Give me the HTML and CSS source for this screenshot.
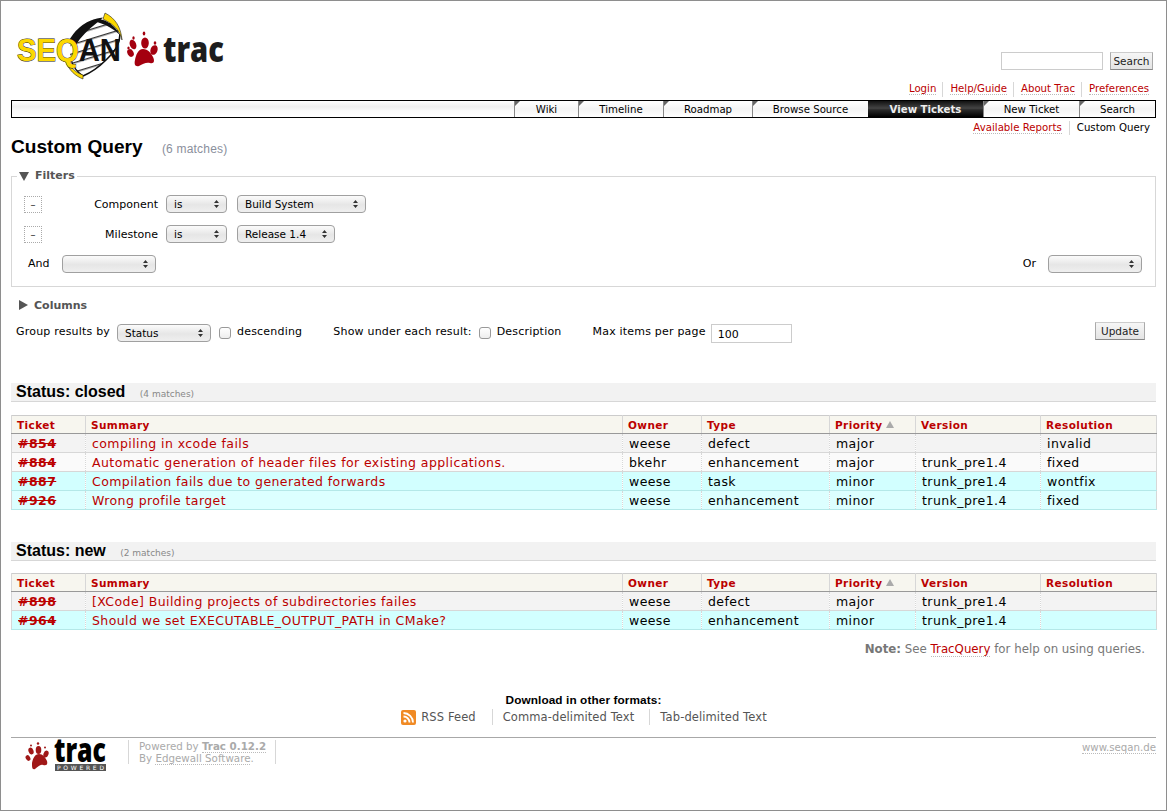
FILE: index.html
```html
<!DOCTYPE html>
<html lang="en">
<head>
<meta charset="utf-8">
<title>Custom Query – SeqAn Trac</title>
<link rel="stylesheet" href="styles.css">
</head>
<body>
<div class="page">
  <header class="banner">
    <svg class="logo" width="215" height="72" viewBox="15 10 215 72" xmlns="http://www.w3.org/2000/svg">
      <defs>
        <pattern id="hatch" width="9" height="9" patternUnits="userSpaceOnUse" patternTransform="rotate(-17)">
          <rect width="9" height="9" fill="#fff"/><rect width="9" height="1.400" fill="#333"/>
        </pattern>
      </defs>
      <path d="M72 38 C80 26 90 19 101 18 C110 20 117 26 121 34 C120 45 113 54 106 60 C98 68 90 73 83 76 C77 72 73 66 71 60 C69 52 70 44 72 38Z" fill="url(#hatch)"/>
      <path d="M71 39 C78 28 88 21 100 19 C97 22 84 30 76 43Z" fill="#111" stroke="#111" stroke-width="2"/>
      <path d="M99 19 C108 20 116 27 120 35 C115 30 107 25 97 22Z" fill="#111"/>
      <path d="M120 34 C120 45 113 54 106 60 C98 68 90 73 83 76" fill="none" stroke="#111" stroke-width="1.600"/>
      <path d="M71 60 C73 66 77 72 83 76" fill="none" stroke="#111" stroke-width="1.200"/>
      <path d="M105 13 C115 18 121 27 122 40 C120 30 113 24 103 19Z" fill="#fcd800" stroke="#222" stroke-width=".6"/>
      <path d="M66 62 C69 70 75 76 83 79 L83 75 C76 73 71 68 68 61Z" fill="#fcd800" stroke="#222" stroke-width=".6"/>
      <text class="logo-word" x="17" y="61" textLength="104" lengthAdjust="spacingAndGlyphs"><tspan class="logo-seq">SEQ</tspan><tspan class="logo-an">AN</tspan></text>
      <g fill="#a4000f">
        <path d="M143 49 C148 49 151 53 153 57 C155 61 154 64 150 63 C146 62 143 64 139 66 C135 67 134 64 135 60 C136 55 138 49 143 49Z"/>
        <ellipse cx="133" cy="44.500" rx="3.200" ry="5" transform="rotate(-20 133 44.500)"/>
        <ellipse cx="145" cy="43" rx="3.800" ry="5.500"/>
        <ellipse cx="154" cy="50" rx="3.500" ry="5" transform="rotate(20 154 50)"/>
        <ellipse cx="130.500" cy="53" rx="3" ry="4" transform="rotate(-30 130.500 53)"/>
        <ellipse cx="144" cy="33.500" rx="1.300" ry="2"/>
        <ellipse cx="133.500" cy="38" rx="1.200" ry="1.800"/>
        <ellipse cx="155" cy="43" rx="1.300" ry="1.800"/>
        <ellipse cx="128.500" cy="48" rx="1.200" ry="1.600"/>
      </g>
      <text class="logo-trac" x="163" y="62" textLength="61" lengthAdjust="spacingAndGlyphs">trac</text>
    </svg>
    <div class="banner-right">
      <form class="search-form">
        <input class="search-input" type="text" aria-label="Search">
        <button class="btn" type="button">Search</button>
      </form>
      <ul class="metanav">
        <li><a href="#">Login</a></li>
        <li><a href="#">Help/Guide</a></li>
        <li><a href="#">About Trac</a></li>
        <li><a href="#">Preferences</a></li>
      </ul>
    </div>
  </header>

  <nav class="mainnav">
    <a class="tab w-wiki" href="#">Wiki</a>
    <a class="tab w-timeline" href="#">Timeline</a>
    <a class="tab w-roadmap" href="#">Roadmap</a>
    <a class="tab w-browse" href="#">Browse Source</a>
    <a class="tab tab-active w-view" href="#">View Tickets</a>
    <a class="tab w-new" href="#">New Ticket</a>
    <a class="tab w-search" href="#">Search</a>
  </nav>

  <ul class="ctxtnav">
    <li><a href="#">Available Reports</a></li>
    <li>Custom Query</li>
  </ul>

  <h1 class="title">Custom Query <small class="numresults">(6 matches)</small></h1>

  <fieldset class="filters">
    <legend class="legend"><span class="tri-down"></span>Filters</legend>
    <div class="filter-row">
      <span class="minus">–</span>
      <label class="filter-label">Component</label>
      <select class="sel sel-op"><option>is</option></select>
      <select class="sel sel-build"><option>Build System</option></select>
    </div>
    <div class="filter-row">
      <span class="minus">–</span>
      <label class="filter-label">Milestone</label>
      <select class="sel sel-op"><option>is</option></select>
      <select class="sel sel-rel"><option>Release 1.4</option></select>
    </div>
    <div class="add-row">
      <label class="and-label">And</label>
      <select class="sel sel-add"><option></option></select>
      <label class="or-label">Or</label>
      <select class="sel sel-add"><option></option></select>
    </div>
  </fieldset>

  <div class="columns-head"><span class="tri-right"></span>Columns</div>

  <div class="options">
    <label class="opt-label">Group results by</label>
    <select class="sel sel-group"><option>Status</option></select>
    <input class="check" type="checkbox" aria-label="descending">
    <label class="opt-label opt-desc">descending</label>
    <label class="opt-label opt-show">Show under each result:</label>
    <input class="check" type="checkbox" aria-label="Description">
    <label class="opt-label opt-desc2">Description</label>
    <label class="opt-label opt-max">Max items per page</label>
    <input class="max-input" type="text" value="100" aria-label="Max items per page">
    <button class="btn btn-update" type="button">Update</button>
  </div>

  <h2 class="group-head first">Status: closed <span class="group-num">(4 matches)</span></h2>
  <table class="listing">
    <colgroup><col class="c-ticket"><col class="c-summary"><col class="c-owner"><col class="c-type"><col class="c-priority"><col class="c-version"><col class="c-res"></colgroup>
    <thead><tr><th>Ticket</th><th>Summary</th><th>Owner</th><th>Type</th><th>Priority<span class="sort"></span></th><th>Version</th><th>Resolution</th></tr></thead>
    <tbody>
      <tr class="major-a"><td class="tid"><a href="#">#854</a></td><td><a href="#">compiling in xcode fails</a></td><td>weese</td><td>defect</td><td>major</td><td></td><td>invalid</td></tr>
      <tr class="major-b"><td class="tid"><a href="#">#884</a></td><td><a href="#">Automatic generation of header files for existing applications.</a></td><td>bkehr</td><td>enhancement</td><td>major</td><td>trunk_pre1.4</td><td>fixed</td></tr>
      <tr class="minor-a"><td class="tid"><a href="#">#887</a></td><td><a href="#">Compilation fails due to generated forwards</a></td><td>weese</td><td>task</td><td>minor</td><td>trunk_pre1.4</td><td>wontfix</td></tr>
      <tr class="minor-b"><td class="tid"><a href="#">#926</a></td><td><a href="#">Wrong profile target</a></td><td>weese</td><td>enhancement</td><td>minor</td><td>trunk_pre1.4</td><td>fixed</td></tr>
    </tbody>
  </table>

  <h2 class="group-head second">Status: new <span class="group-num">(2 matches)</span></h2>
  <table class="listing listing-second">
    <colgroup><col class="c-ticket"><col class="c-summary"><col class="c-owner"><col class="c-type"><col class="c-priority"><col class="c-version"><col class="c-res"></colgroup>
    <thead><tr><th>Ticket</th><th>Summary</th><th>Owner</th><th>Type</th><th>Priority<span class="sort"></span></th><th>Version</th><th>Resolution</th></tr></thead>
    <tbody>
      <tr class="major-a"><td class="tid"><a href="#">#898</a></td><td><a href="#">[XCode] Building projects of subdirectories failes</a></td><td>weese</td><td>defect</td><td>major</td><td>trunk_pre1.4</td><td></td></tr>
      <tr class="minor-a"><td class="tid"><a href="#">#964</a></td><td><a href="#">Should we set EXECUTABLE_OUTPUT_PATH in CMake?</a></td><td>weese</td><td>enhancement</td><td>minor</td><td>trunk_pre1.4</td><td></td></tr>
    </tbody>
  </table>

  <p class="help"><strong>Note:</strong> See <a href="#">TracQuery</a> for help on using queries.</p>

  <div class="altlinks">
    <h3 class="altlinks-title">Download in other formats:</h3>
    <ul class="altlinks-list">
      <li class="alt-first">
        <svg class="rss" width="15" height="15" viewBox="0 0 15 15" xmlns="http://www.w3.org/2000/svg"><rect width="15" height="15" rx="2" fill="#f08a24"/><circle cx="4" cy="11" r="1.600" fill="#fff"/><path d="M2.500 6.500a6 6 0 0 1 6 6M2.500 3a9.500 9.500 0 0 1 9.500 9.500" fill="none" stroke="#fff" stroke-width="1.800"/></svg>
        <a href="#">RSS Feed</a></li>
      <li><a href="#">Comma-delimited Text</a></li>
      <li><a href="#">Tab-delimited Text</a></li>
    </ul>
  </div>

  <footer class="footer">
    <svg class="footer-logo" width="82" height="31" viewBox="24 738 82 31" xmlns="http://www.w3.org/2000/svg">
      <g fill="#a01818">
        <path d="M39 752 C43 752 45 755 47 759 C48 763 46 764 43 763 C40 762 38 765 35 767 C32 768 32 765 32 761 C33 756 35 752 39 752Z"/>
        <ellipse cx="31" cy="749" rx="2.500" ry="3.500" transform="rotate(-20 31 749)"/>
        <ellipse cx="38.500" cy="748" rx="2.800" ry="4"/>
        <ellipse cx="46" cy="752" rx="2.500" ry="3.500" transform="rotate(20 46 752)"/>
        <ellipse cx="28" cy="756" rx="2.200" ry="3" transform="rotate(-30 28 756)"/>
        <circle cx="38" cy="741.500" r="1.200"/><circle cx="31" cy="743.500" r="1"/><circle cx="45" cy="745.500" r="1"/>
      </g>
      <text class="flogo-trac" x="54" y="760" textLength="52" lengthAdjust="spacingAndGlyphs">trac</text>
      <rect x="55" y="762" width="51" height="7" fill="#555"/>
      <text class="flogo-powered" x="57" y="768" textLength="47" lengthAdjust="spacing">POWERED</text>
    </svg>
    <div class="powered">Powered by <a class="pb" href="#">Trac 0.12.2</a><br>By <a href="#">Edgewall Software</a>.</div>
    <div class="footer-site"><a href="#">www.seqan.de</a></div>
  </footer>
</div>
</body>
</html>
```
FILE: styles.css
```css
* { box-sizing: border-box; }
html, body { margin: 0; padding: 0; background: #fff; }
body { font-family: "DejaVu Sans", Verdana, sans-serif; font-size: 12px; color: #000; }
a { color: #b00; text-decoration: none; }
ul { list-style: none; margin: 0; padding: 0; }

.page {
  width: 1167px; height: 811px; overflow: hidden;
  border: 1px solid #8e8e8e;
  padding: 0 10px;
}

/* banner */
.banner { display: flex; justify-content: space-between; height: 99px; }
.logo { margin: 9px 0 0 4px; display: block; overflow: visible; }
.logo-word { font: bold 31px "Liberation Sans", sans-serif; }
.logo-seq { fill: #fcd800; stroke: #222; stroke-width: .9px; paint-order: stroke; }
.logo-an { fill: #111; }
.logo-trac { font: 800 36px "Open Sans", sans-serif; fill: #1d1d1d; }
.banner-right { display: flex; flex-direction: column; align-items: flex-end; }
.search-form { display: flex; align-items: center; gap: 7px; margin: 50px 3px 0 0; height: 20px; }
.search-input { width: 102px; height: 18px; border: 1px solid #ccc; background: #fff; padding: 0; }
.btn {
  font: 10.500px "DejaVu Sans", sans-serif; color: #222; padding: 0;
  background: linear-gradient(#f6f6f6, #e4e4e4); border: 1px solid #aaa; border-top-color: #ccc; border-bottom-color: #888;
  height: 18px; width: 43px;
}
.metanav { display: flex; margin: 11px 7px 0 0; height: 15px; font-size: 10.200px; }
.metanav li { padding: 0 6px 0 7px; border-left: 1px solid #d7d7d7; line-height: 13px; }
.metanav li:first-child { border-left: 0; }
.metanav li:last-child { padding-right: 0; }
.metanav a, .ctxtnav a, .help a, .powered a, .footer-site a { border-bottom: 1px dotted #bbb; }

/* main nav */
.mainnav {
  display: flex; justify-content: flex-end; height: 18px;
  border: 1px solid #000; background: linear-gradient(#fff, #f0f0f0 35%, #fafafa 60%, #fff);
}
.tab {
  position: relative; display: block; border-left: 1px solid #888; text-align: center;
  color: #000; font-size: 10.200px; line-height: 18px; height: 16px; background: linear-gradient(#fff, #f4f4f4 50%, #fff);
}
.tab::before {
  content: ""; position: absolute; left: 0; top: 0;
  border-style: solid; border-width: 5px 5px 0 0; border-color: #666 transparent transparent transparent;
}
.w-wiki { width: 64px; } .w-timeline { width: 85px; } .w-roadmap { width: 89px; }
.w-browse { width: 116px; } .w-view { width: 115px; } .w-new { width: 96px; } .w-search { width: 76px; }
.tab-active {
  background: linear-gradient(#111, #444 45%, #2a2a2a 55%, #000); color: #eee; font-weight: bold; border-left: 0;
}
.tab-active::before { display: none; }

.ctxtnav { display: flex; justify-content: flex-end; margin-top: 3px; height: 14px; padding-right: 6px; font-size: 10.200px; }
.ctxtnav li { padding: 0 7px; border-left: 1px solid #d7d7d7; line-height: 13px; }
.ctxtnav li:first-child { border-left: 0; }
.ctxtnav li:last-child { padding-right: 0; }

/* title */
.title { margin: 0; height: 35px; font: bold 19.100px/24px "Liberation Sans", sans-serif; }
.numresults { font: normal 12px "Liberation Sans", sans-serif; color: #8a8f9c; margin-left: 14px; letter-spacing: .2px; }

/* filters */
.filters { margin: 0; padding: 0 0 0 12px; height: 117px; border: 1px solid #d7d7d7; min-width: 0; }
.legend { padding: 0 2px 0 2px; margin: 0 0 0 -7px; font-weight: bold; font-size: 11px; color: #555; line-height: 12px; display: flex; align-items: center; }
.tri-down { display: inline-block; margin-right: 6px; border-style: solid; border-width: 9px 5px 0 5px; border-color: #555 transparent transparent transparent; }
.tri-right { display: inline-block; margin-right: 6px; border-style: solid; border-width: 5px 0 5px 9px; border-color: transparent transparent transparent #555; }
.filter-row { display: flex; align-items: center; height: 18px; margin-top: 12px; font-size: 11px; }
.filter-row:first-of-type { margin-top: 13px; }
.minus { display: block; width: 18px; height: 17px; border: 1px dotted #aaa; text-align: center; font-size: 10px; line-height: 15px; color: #333; }
.filter-label { width: 116px; text-align: right; margin-right: 8px; }
.sel {
  appearance: none; -webkit-appearance: none; height: 18px; padding: 0 14px 0 7px; margin: 0;
  font: 10.500px "DejaVu Sans", sans-serif; color: #000; border: 1px solid #a0a0a0; border-radius: 4px;
  background-color: #eee;
  background-image:
    url("data:image/svg+xml,%3Csvg xmlns='http://www.w3.org/2000/svg' width='7' height='10'%3E%3Cpath d='M3.500 1L6 4H1zM3.500 9L1 6h5z' fill='%23333'/%3E%3C/svg%3E"),
    linear-gradient(#fbfbfb, #e6e6e6 55%, #efefef);
  background-repeat: no-repeat, no-repeat;
  background-position: right 6px center, 0 0;
}
.sel-op { width: 61px; margin-right: 10px; }
.sel-build { width: 129px; }
.sel-rel { width: 98px; }
.sel-add { width: 94px; }
.add-row { display: flex; align-items: center; height: 19px; margin-top: 11px; font-size: 11px; padding-right: 13px; }
.and-label { margin: 0 13px 0 4px; }
.or-label { margin: 0 12px 0 auto; }

.columns-head { display: flex; align-items: center; height: 12px; margin: 12px 0 0 8px; font-weight: bold; font-size: 11px; color: #555; }

/* options */
.options { display: flex; align-items: center; height: 20px; margin-top: 10px; padding-left: 5px; font-size: 11px; letter-spacing: .2px; }
.sel-group { width: 94px; margin: 4px 8px 0 7px; }
.check { appearance: none; -webkit-appearance: none; width: 12px; height: 12px; margin: 3px 0 0; border: 1px solid #999; border-radius: 3px; background: linear-gradient(#fff, #eee); }
.opt-desc { margin: 0 31px 0 6px; }
.opt-show { margin-right: 7px; }
.opt-desc2 { margin: 0 31px 0 6px; }
.opt-max { margin-right: 5px; }
.max-input { width: 81px; height: 19px; border: 1px solid #ccc; padding: 2px 6px 0; font: 11px "DejaVu Sans", sans-serif; margin-top: 4px; }
.btn-update { width: 50px; margin-left: auto; margin-right: 11px; letter-spacing: 0; }

/* groups */
.group-head { display: block; margin: 0; height: 19px; background: #f2f2f2; border-bottom: 1px solid #d7d7d7; padding-left: 5px; font: bold 16px/17px "Liberation Sans", sans-serif; }
.group-head.first { margin-top: 42px; }
.group-head.second { margin-top: 32px; }
.group-num { font: normal 9px "DejaVu Sans", sans-serif; color: #888; margin-left: 10px; }

.listing { width: 1145px; margin-top: 13px; border-collapse: collapse; table-layout: fixed; border: 1px solid #d7d7d7; border-top: 1px solid #ccc; border-bottom: 0; }
.listing-second { margin-top: 12px; }
.c-ticket { width: 74px; } .c-summary { width: 537px; } .c-owner { width: 79px; } .c-type { width: 128px; }
.c-priority { width: 86px; } .c-version { width: 125px; } .c-res { width: 116px; }
.listing th {
  height: 18px; padding: 1px 0 0 5px; text-align: left; font-size: 10.500px; line-height: 14px; letter-spacing: .4px; color: #b00; background: #f7f6ef;
  border-left: 1px solid #d7d7d7; border-bottom: 1px solid #999;
}
.sort { display: inline-block; margin-left: 3px; vertical-align: 1px; border-style: solid; border-width: 0 4px 7px 4px; border-color: transparent transparent #aaa transparent; }
.listing td {
  height: 19px; padding: 1px 0 0 6px; font-size: 12.500px; letter-spacing: .42px; line-height: 15px; white-space: nowrap; overflow: hidden;
  border-left: 1px dotted #d7d7d7; border-bottom: 1px solid #d7d7d7;
}
.listing td.tid { font-weight: bold; }
.listing td.tid a { text-decoration: line-through; }
.major-a td { background: #f3f3f3; }
.major-b td { background: #fafafa; }
.minor-a td { background: #d2ffff; border-bottom-color: #b4e8e8; }
.minor-b td { background: #dcffff; border-bottom-color: #b4e8e8; }

.help { margin: 11px 11px 0 0; text-align: right; font-size: 11.800px; line-height: 16px; color: #777; }
.help strong { color: #777; }

.altlinks { margin-top: 36px; text-align: center; font-size: 11.500px; letter-spacing: .1px; }
.altlinks-title { margin: 0; font: bold 11.800px/14px "Liberation Sans", sans-serif; }
.altlinks-list { display: flex; justify-content: center; margin-top: 0; padding-left: 6px; line-height: 16px; }
.altlinks-list li { padding: 0 15px 0 10px; border-left: 1px solid #d7d7d7; height: 16px; margin-top: 2px; }
.altlinks-list li.alt-first { border-left: 0; display: flex; align-items: center; gap: 5px; padding-right: 16px; }
.altlinks-list a { color: #555; }

.footer { display: flex; margin-top: 12px; padding-top: 2px; border-top: 1px solid #a8a8a8; height: 40px; font-size: 10.300px; color: #aaa; }
.footer-logo { margin-left: 13px; display: block; overflow: visible; }
.flogo-trac { font: 800 34px "Open Sans", sans-serif; fill: #000; }
.flogo-powered { font: 6px "DejaVu Sans", sans-serif; fill: #fff; }
.powered { margin-left: 22px; padding: 0 9px 0 10px; border-left: 1px solid #d7d7d7; border-right: 1px solid #d7d7d7; height: 24px; line-height: 12px; }
.powered a { color: #aaa; }
.powered .pb { font-weight: bold; }
.footer-site { margin-left: auto; margin-top: 2px; line-height: 12px; font-size: 10.200px; }
.footer-site a { color: #aaa; }
```
